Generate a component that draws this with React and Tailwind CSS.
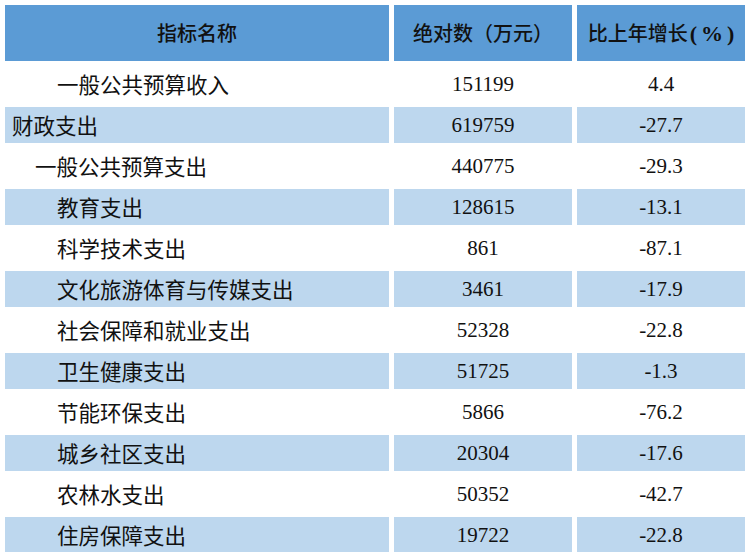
const rows = [
    { name: '一般公共预算收入', indent: 'pl-[52px]', value: '151199', growth: '4.4', shade: false },
    { name: '财政支出', indent: 'pl-[7px]', value: '619759', growth: '-27.7', shade: true },
    { name: '一般公共预算支出', indent: 'pl-[30px]', value: '440775', growth: '-29.3', shade: false },
    { name: '教育支出', indent: 'pl-[52px]', value: '128615', growth: '-13.1', shade: true },
    { name: '科学技术支出', indent: 'pl-[52px]', value: '861', growth: '-87.1', shade: false },
    { name: '文化旅游体育与传媒支出', indent: 'pl-[52px]', value: '3461', growth: '-17.9', shade: true },
    { name: '社会保障和就业支出', indent: 'pl-[52px]', value: '52328', growth: '-22.8', shade: false },
    { name: '卫生健康支出', indent: 'pl-[52px]', value: '51725', growth: '-1.3', shade: true },
    { name: '节能环保支出', indent: 'pl-[52px]', value: '5866', growth: '-76.2', shade: false },
    { name: '城乡社区支出', indent: 'pl-[52px]', value: '20304', growth: '-17.6', shade: true },
    { name: '农林水支出', indent: 'pl-[52px]', value: '50352', growth: '-42.7', shade: false },
    { name: '住房保障支出', indent: 'pl-[52px]', value: '19722', growth: '-22.8', shade: true },
];

const App = () => {
    return (
        <div className="w-[748px] h-[552px] overflow-hidden bg-white text-[#111]">
            <div className="grid grid-cols-[384px_178px_168px] gap-x-[5px] gap-y-[5px] pl-[5px] pt-[5px]">
                {/* Header */}
                <div className="h-[56px] bg-[#5b9bd5] flex items-center justify-center font-['Noto_Sans_CJK_SC',sans-serif] font-medium text-[20px]">
                    指标名称
                </div>
                <div className="h-[56px] bg-[#5b9bd5] flex items-center justify-center font-['Noto_Sans_CJK_SC',sans-serif] font-medium text-[20px]">
                    绝对数（万元）
                </div>
                <div className="h-[56px] bg-[#5b9bd5] flex items-center justify-center font-['Noto_Sans_CJK_SC',sans-serif] font-medium text-[20px]">
                    比上年增长
                    <span className="font-['Liberation_Serif',serif] font-bold text-[22px] ml-[2px] flex items-center">
                        <span>(</span>
                        <span className="mx-[4px]">%</span>
                        <span>)</span>
                    </span>
                </div>

                {/* Body rows */}
                {rows.map((row, i) => (
                    <div key={i} className="contents">
                        <div className={`h-[36px] flex items-center ${row.indent} ${row.shade ? 'bg-[#bdd7ee]' : 'bg-white'} font-['Noto_Sans_CJK_SC',sans-serif] text-[21.5px] leading-none`}>
                            {row.name}
                        </div>
                        <div className={`h-[36px] flex items-center justify-center ${row.shade ? 'bg-[#bdd7ee]' : 'bg-white'} font-['Liberation_Serif',serif] text-[21px] leading-none`}>
                            {row.value}
                        </div>
                        <div className={`h-[36px] flex items-center justify-center ${row.shade ? 'bg-[#bdd7ee]' : 'bg-white'} font-['Liberation_Serif',serif] text-[21px] leading-none`}>
                            {row.growth}
                        </div>
                    </div>
                ))}
            </div>
        </div>
    );
};

export default App;
